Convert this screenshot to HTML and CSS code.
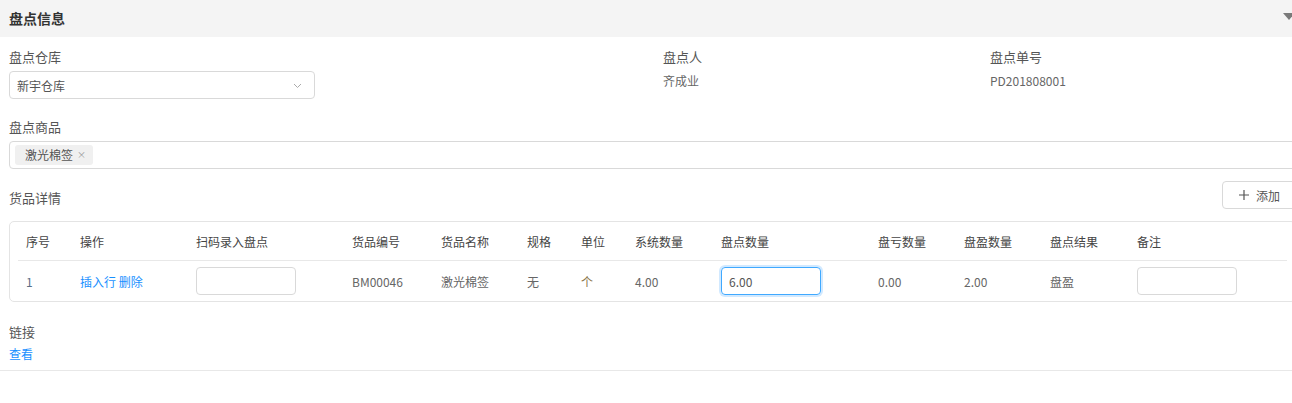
FILE: index.html
```html
<!DOCTYPE html>
<html lang="zh-CN">
<head>
<meta charset="utf-8">
<title>盘点信息</title>
<link rel="stylesheet" href="styles.css">
</head>
<body>
<div class="page">
  <div class="panel-header">
    <span class="panel-title">盘点信息</span>
    <span class="caret"></span>
  </div>
  <div class="panel-body">
    <div class="info-grid">
      <div class="field">
        <div class="label">盘点仓库</div>
        <div class="select">
          <span>新宇仓库</span>
          <svg class="chev" width="9" height="6" viewBox="0 0 9 6"><path d="M1 1 L4.5 4.5 L8 1" fill="none" stroke="#aaa" stroke-width="1"/></svg>
        </div>
      </div>
      <div class="field">
        <div class="label">盘点人</div>
        <div class="value">齐成业</div>
      </div>
      <div class="field">
        <div class="label">盘点单号</div>
        <div class="value">PD201808001</div>
      </div>
    </div>

    <div class="field goods">
      <div class="label">盘点商品</div>
      <div class="tag-input">
        <span class="tag">激光棉签<span class="tag-x">×</span></span>
      </div>
    </div>

    <div class="detail-head">
      <div class="label detail-label">货品详情</div>
      <button class="btn-add">
        <svg width="10" height="10" viewBox="0 0 10 10"><path d="M5 0 V10 M0 5 H10" stroke="#555" stroke-width="1.2" fill="none"/></svg>
        <span>添加</span>
      </button>
    </div>

    <div class="table-box">
      <table class="grid">
        <colgroup>
          <col class="w54"><col class="w116"><col class="w156"><col class="w89"><col class="w86"><col class="w54"><col class="w54"><col class="w86"><col class="w157"><col class="w86"><col class="w86"><col class="w87"><col class="w158">
        </colgroup>
        <thead>
          <tr>
            <th>序号</th><th>操作</th><th>扫码录入盘点</th><th>货品编号</th><th>货品名称</th><th>规格</th><th>单位</th><th>系统数量</th><th>盘点数量</th><th>盘亏数量</th><th>盘盈数量</th><th>盘点结果</th><th>备注</th>
          </tr>
        </thead>
        <tbody>
          <tr>
            <td class="idx">1</td>
            <td><a class="link">插入行</a> <a class="link">删除</a></td>
            <td><div class="inp"></div></td>
            <td>BM00046</td>
            <td>激光棉签</td>
            <td>无</td>
            <td class="unit">个</td>
            <td>4.00</td>
            <td><div class="inp focus">6.00</div></td>
            <td>0.00</td>
            <td>2.00</td>
            <td>盘盈</td>
            <td><div class="inp"></div></td>
          </tr>
        </tbody>
      </table>
    </div>

    <div class="link-block">
      <div class="label">链接</div>
      <a class="link view">查看</a>
    </div>
  </div>
</div>
</body>
</html>
```

FILE: styles.css
```css
html, body {
  margin: 0;
  padding: 0;
  overflow: hidden;
  background: #fff;
}
body {
  font-family: "Noto Sans CJK SC", "Microsoft YaHei", "Liberation Sans", sans-serif;
  font-size: 12px;
  color: #555;
}
.page {
  width: 1305px;
}
.panel-header {
  height: 37px;
  background: #f4f4f4;
  display: flex;
  align-items: center;
  padding-left: 9px;
  position: relative;
}
.panel-title {
  font-size: 14px;
  font-weight: bold;
  color: #333;
  line-height: 18px;
  margin-top: -2px;
}
.caret {
  position: absolute;
  left: 1283px;
  top: 13px;
  width: 0;
  height: 0;
  border-left: 6px solid transparent;
  border-right: 6px solid transparent;
  border-top: 7px solid #7a7a7a;
}
.panel-body {
  padding: 11px 9px 7px 9px;
  border-bottom: 1px solid #e8e8e8;
}
.info-grid {
  display: grid;
  grid-template-columns: 654px 327px 1fr;
}
.label {
  font-size: 13px;
  line-height: 18px;
  color: #555;
}
.value {
  margin-top: 6px;
  line-height: 18px;
  color: #666;
}
.select {
  margin-top: 5px;
  width: 306px;
  height: 28px;
  box-sizing: border-box;
  border: 1px solid #d9d9d9;
  border-radius: 4px;
  display: flex;
  align-items: center;
  justify-content: space-between;
  padding: 0 12px 0 7px;
  color: #555;
}
.chev {
  margin-top: 1px;
}
.goods {
  margin-top: 19px;
}
.tag-input {
  margin-top: 5px;
  height: 28px;
  box-sizing: border-box;
  border: 1px solid #d9d9d9;
  border-radius: 4px;
  display: flex;
  align-items: center;
  padding-left: 5px;
}
.tag {
  display: inline-flex;
  align-items: center;
  height: 20px;
  background: #f0f0f0;
  border-radius: 3px;
  padding: 0 7px 0 10px;
  color: #555;
  line-height: 20px;
}
.tag-x {
  margin-left: 4px;
  font-size: 9px;
  color: #999;
}
.detail-head {
  margin-top: 12px;
  display: flex;
  justify-content: space-between;
  align-items: flex-start;
}
.detail-label {
  margin-top: 8px;
}
.btn-add {
  width: 74px;
  height: 28px;
  box-sizing: border-box;
  border: 1px solid #d9d9d9;
  border-radius: 4px;
  background: #fff;
  display: flex;
  align-items: center;
  padding: 0 0 0 16px;
  font-family: inherit;
  font-size: 12px;
  color: #555;
}
.btn-add span {
  margin-left: 7px;
}
.table-box {
  margin-top: 12px;
  border: 1px solid #e4e4e4;
  border-radius: 5px;
  padding: 1px 8px 0 8px;
}
.grid {
  border-collapse: collapse;
  table-layout: fixed;
  width: 1269px;
}
.w54 { width: 54px; }
.w116 { width: 116px; }
.w156 { width: 156px; }
.w89 { width: 89px; }
.w86 { width: 86px; }
.w87 { width: 87px; }
.w157 { width: 157px; }
.w158 { width: 158px; }
.grid th {
  height: 37px;
  font-weight: normal;
  text-align: left;
  padding: 0 0 0 8px;
  color: #444;
  border-bottom: 1px solid #e8e8e8;
  white-space: nowrap;
}
.grid td {
  height: 40px;
  padding: 0 0 0 8px;
  color: #666;
  white-space: nowrap;
}
.grid td.idx {
  color: #5a6e86;
}
.grid td.unit {
  color: #8a7448;
}
.link {
  color: #1890ff;
  text-decoration: none;
  cursor: pointer;
}
.inp {
  width: 100px;
  height: 28px;
  box-sizing: border-box;
  border: 1px solid #d9d9d9;
  border-radius: 4px;
  display: flex;
  align-items: center;
  padding-left: 7px;
  color: #555;
}
.inp.focus {
  border-color: #40a9ff;
  box-shadow: 0 0 0 2px rgba(24, 144, 255, 0.2);
}
.link-block {
  margin-top: 21px;
}
.view {
  display: block;
  margin-top: 4px;
  font-size: 12px;
  line-height: 18px;
}
```
